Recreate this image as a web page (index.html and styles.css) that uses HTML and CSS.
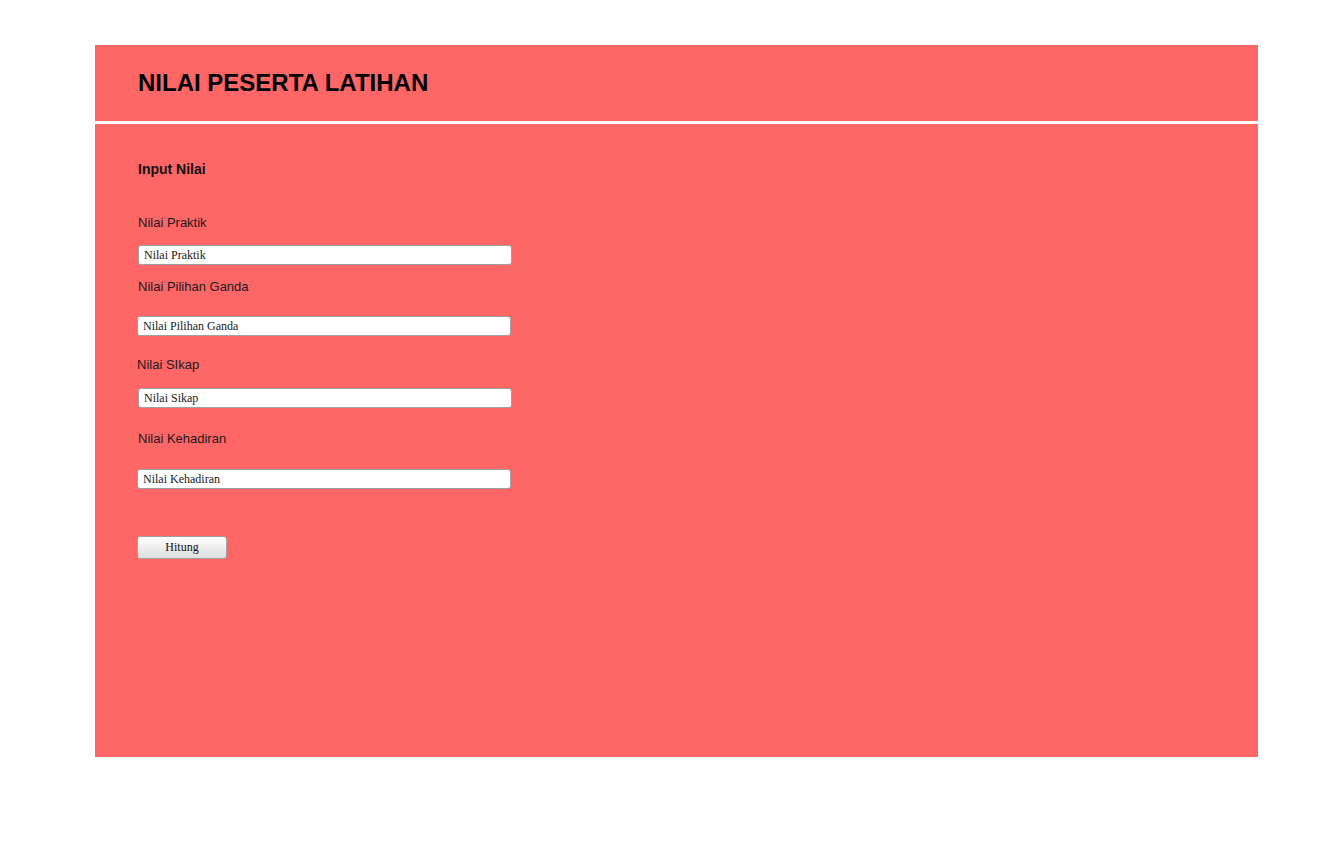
FILE: index.html
```html
<!DOCTYPE html>
<html lang="id">
<head>
<meta charset="utf-8">
<title>Nilai Peserta Latihan</title>
<link rel="stylesheet" href="styles.css">
</head>
<body>
<div class="page">
  <header class="header">
    <h1 class="title">NILAI PESERTA LATIHAN</h1>
  </header>
  <main class="content">
    <h2 class="section-title">Input Nilai</h2>
    <form class="form">
      <label class="label l1">Nilai Praktik</label>
      <input class="field f1" type="text" placeholder="Nilai Praktik">
      <label class="label l2">Nilai Pilihan Ganda</label>
      <input class="field f2" type="text" placeholder="Nilai Pilihan Ganda">
      <label class="label l3">Nilai SIkap</label>
      <input class="field f3" type="text" placeholder="Nilai Sikap">
      <label class="label l4">Nilai Kehadiran</label>
      <input class="field f4" type="text" placeholder="Nilai Kehadiran">
      <button class="btn" type="button">Hitung</button>
    </form>
  </main>
</div>
</body>
</html>
```
FILE: styles.css
```css
html, body {
  margin: 0;
  padding: 0;
  background: #ffffff;
}
body {
  font-family: "Liberation Sans", Arial, sans-serif;
}
.page {
  margin: 45px 0 0 95px;
  width: 1163px;
}
.header {
  background: #ff6666;
  height: 76px;
  border-bottom: 3px solid #ffffff;
  padding-left: 43px;
  display: flex;
  align-items: center;
}
.title {
  margin: 0;
  font-size: 24px;
  font-weight: bold;
  color: #000;
  line-height: 28px;
}
.content {
  background: #ff6666;
  height: 633px;
  box-sizing: border-box;
  padding: 37px 0 0 43px;
}
.section-title {
  margin: 0;
  font-size: 14px;
  line-height: 16px;
  font-weight: bold;
  color: #111;
}
.form {
  display: flex;
  flex-direction: column;
  align-items: flex-start;
}
.label {
  font-size: 13px;
  line-height: 16px;
  color: #1a1a1a;
}
.l1 { margin-top: 38px; }
.l2 { margin-top: 14px; }
.l3 { margin-top: 21px; margin-left: -1px; }
.l4 { margin-top: 23px; }
.field {
  box-sizing: border-box;
  width: 374px;
  height: 20px;
  margin: 0;
  padding: 0 5px;
  border: 1px solid #a0a0a0;
  border-radius: 3px;
  background: #fff;
  font-family: "Liberation Serif", "Times New Roman", serif;
  font-size: 12px;
  color: #111;
  outline: none;
}
.field::placeholder {
  color: #1a1a1a;
  opacity: 1;
}
.f1 { margin-top: 14px; }
.f2 { margin-top: 21px; margin-left: -1px; }
.f3 { margin-top: 15px; }
.f4 { margin-top: 22px; margin-left: -1px; }
.btn {
  box-sizing: border-box;
  margin-top: 47px;
  margin-left: -1px;
  width: 90px;
  height: 23px;
  padding: 0;
  border: 1px solid #a0a0a0;
  border-radius: 3px;
  background: linear-gradient(#ffffff, #dedede);
  font-family: "Liberation Serif", "Times New Roman", serif;
  font-size: 12px;
  color: #111;
}
```
